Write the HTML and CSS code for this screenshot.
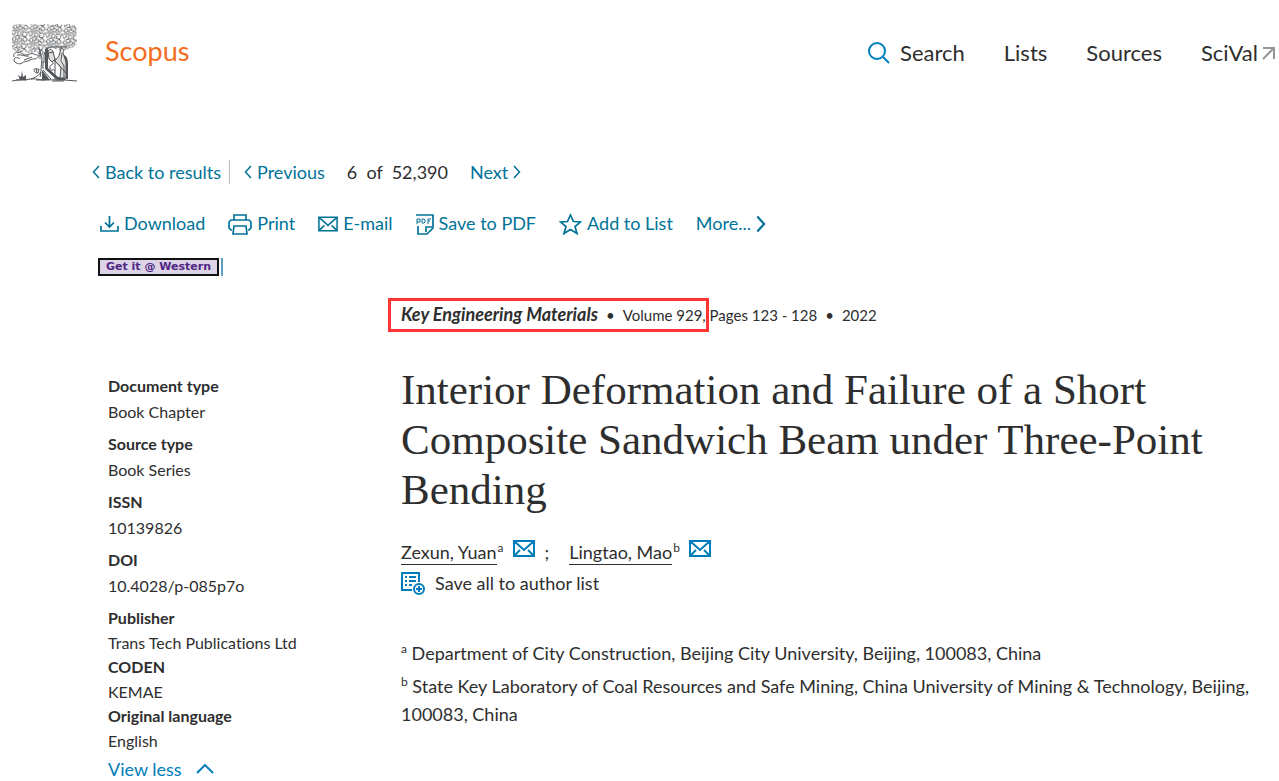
FILE: index.html
```html
<!DOCTYPE html>
<html lang="en">
<head>
    <meta charset="UTF-8">
    <meta name="viewport" content="width=device-width, initial-scale=1.0">
    <title>Scopus - Document details</title>
    <link rel="stylesheet" href="styles.css">
</head>
<body>
    <!-- shared icons -->
    <svg class="sprite" width="0" height="0" aria-hidden="true">
        <symbol id="left" viewBox="0 0 8 14"><path d="M7 1 1.500 7 7 13"/></symbol>
        <symbol id="right" viewBox="0 0 8 14"><path d="M1 1 6.500 7 1 13"/></symbol>
        <symbol id="mail" viewBox="0 0 22 17"><path d="M1 1h20v15H1zM1 1l10 9L21 1M2 15l5-5M20 15l-5-5"/></symbol>
    </svg>

    <header class="header">
        <a class="brand" href="#">
            <svg class="tree" width="66" height="58" viewBox="0 0 66 58" aria-hidden="true">
                <defs>
                    <pattern id="leaves" width="17" height="12" patternUnits="userSpaceOnUse" patternTransform="rotate(4)">
                        <path d="M1 4C1 0 6 0 5 3S2 6 2 3M7 1c5-1 4 5 1 4S6 2 9 2M12 4c-1-5 5-4 4-1s-4 3-3 0M0 9c0-4 5-3 4 0s-4 2-2 0M6 9c1-4 5-1 4 1s-5 1-3-1M11 8c3-3 6 1 4 3s-5 0-3-2M4 12l3-1M10 12l3 0M4 6l3 0M10 6l2 0M16 6l1 2"/>
                    </pattern>
                </defs>
                <path class="canopy" d="M1 1 8 0l6 1 6-1 7 1 6-1 6 1 6-1 6 1 6-1 7 2 1 5-1 6 1 6-3 4-5 2-5 2-6-1-5-2-6 1-3 6-5 1-2-5-6 2-7-1-7 0-6-4 1-6-3-5z"/>
                <path class="line" d="M2 33c-2-5 5-6 9-3s7-2 11 0 6 0 4 3-5 1-8 3-6 1-8 3-8 0-8-3 4-3 6-1M5 31c5-1 8 2 12 1M12 36l8-3M27 24l3 10-1 12c0 4-4 7-10 9M28 27v8M35 23l-3 8v8M31 37v8M29 48l-1 5M31 46l8 9M34 25l5-2 16 0M22 46c1-3 3 0 5-1l-1 4c-2 0-4-1-4-3zM24 44l1 5M43 34v22M38 33c4 0 2 4 3 6s-4 1-3 5 4 0 5 3"/>
                <path class="line" d="M0 57c8-2 12-1 19-2s10 2 17 1 9 1 16 0l13 1M4 56h11M24 56h8M40 57h12"/>
                <path class="shade" d="M33 25v20l12 11h9v-3h-8l-10-9V25zM52 31c3 1 4 5 4 9v15h-3zM8 56l-2-5 3 2 1-6 1 6 3-2v5zM30 46l8 10h-8z"/>
                <path class="figure" d="M36 27c2-3 5-1 5 1l2 7-3 3-3-3zM49 24c3 0 3 3 2 5l3 9v16h-6l1-11-6-6 4-5zM42 36l13 14M50 29l-1 8 3 5v12M36 29l6-1"/>
            </svg>
            <span class="brand_name">Scopus</span>
        </a>
        <nav class="nav">
            <a href="#"><svg class="search" width="24" height="24" viewBox="0 0 24 24" aria-hidden="true"><circle cx="10" cy="10" r="8"/><path d="m16 16 6 6"/></svg>Search</a>
            <a href="#">Lists</a>
            <a href="#">Sources</a>
            <a class="scival" href="#">SciVal<svg width="14" height="14" viewBox="0 0 14 14" aria-hidden="true"><path d="M1 2h11v11M12 2 1 13"/></svg></a>
        </nav>
    </header>

    <div class="tools">
        <nav class="pager">
            <a class="back" href="#"><svg width="8" height="14"><use href="#left"/></svg>Back to results</a>
            <a class="previous" href="#"><svg width="8" height="14"><use href="#left"/></svg>Previous</a>
            <span class="count">6&nbsp; of &nbsp;52,390</span>
            <a href="#">Next<svg width="8" height="14"><use href="#right"/></svg></a>
        </nav>

        <div class="actions">
            <button type="button"><svg class="low" width="19" height="16" viewBox="0 0 19 16" aria-hidden="true"><path d="M1 10v5h17v-5M9.500 0v11M5 6.500l4.500 4.500L14 6.500"/></svg>Download</button>
            <button type="button"><svg class="low" width="24" height="21" viewBox="0 0 24 21" aria-hidden="true"><path d="M6 6V1h12v5M4 16H3l-2-2V8l2-2h18l2 2v6l-2 2h-1M6 12h12l1 8H5z"/></svg>Print</button>
            <button type="button"><svg class="low" width="20" height="16"><use href="#mail"/></svg>E-mail</button>
            <button type="button"><svg class="low" width="18" height="21" viewBox="0 0 18 21" aria-hidden="true"><path d="M0 1h17v13l-6 6H2v-8M16 13h-6v5"/><path class="fine" d="M1 10V5h3v3H1M6 9V5h2l1 1v2L8 9zM12 10V5h3M12 7h2"/></svg>Save to PDF</button>
            <button type="button"><svg class="low" width="23" height="22" viewBox="0 0 23 22" aria-hidden="true"><path d="m11.500 2 3 6.500 7 .5-5.500 4.500 2 7-6.500-4-6.500 4 2-7L1.500 9l7-.5z"/></svg>Add to List</button>
            <button type="button">More...<svg class="low" width="10" height="18"><use href="#right"/></svg></button>
        </div>

        <div class="links">
            <a class="getit" href="#">Get it @ Western</a>
        </div>
    </div>

    <main class="document">
        <aside class="details">
            <dl>
                <div><dt>Document type</dt><dd>Book Chapter</dd></div>
                <div><dt>Source type</dt><dd>Book Series</dd></div>
                <div><dt>ISSN</dt><dd>10139826</dd></div>
                <div><dt>DOI</dt><dd>10.4028/p-085p7o</dd></div>
                <div class="compact"><dt>Publisher</dt><dd>Trans Tech Publications Ltd</dd></div>
                <div class="compact"><dt>CODEN</dt><dd>KEMAE</dd></div>
                <div class="compact"><dt>Original language</dt><dd>English</dd></div>
            </dl>
            <button class="less" type="button">View less<svg width="18" height="10" viewBox="0 0 18 10" aria-hidden="true"><path d="m1 9 8-8 8 8"/></svg></button>
        </aside>

        <article class="article">
            <p class="source"><span class="marked"><b>Key Engineering Materials</b><i>•</i>Volume 929,</span> Pages 123 - 128<i>•</i>2022</p>
            <h1>Interior Deformation and Failure of a Short Composite Sandwich Beam under Three-Point Bending</h1>
            <ul class="authors">
                <li><a class="name" href="#">Zexun, Yuan</a><sup>a</sup><a class="mail" href="#" aria-label="E-mail Zexun, Yuan"><svg width="22" height="17"><use href="#mail"/></svg></a><span class="semi">;</span></li>
                <li><a class="name" href="#">Lingtao, Mao</a><sup>b</sup><a class="mail" href="#" aria-label="E-mail Lingtao, Mao"><svg width="22" height="17"><use href="#mail"/></svg></a></li>
            </ul>
            <button class="save" type="button"><svg width="24" height="24" viewBox="0 0 24 24" aria-hidden="true"><path d="M11 19H1V2h17v9M4 6h2M8 6h7M4 10h2M8 10h7M4 14h2M8 14h3"/><circle cx="18" cy="18" r="5"/><path d="M15 18h6M18 15v6"/></svg>Save all to author list</button>
            <ul class="places">
                <li><sup>a</sup> Department of City Construction, Beijing City University, Beijing, 100083, China</li>
                <li><sup>b</sup> State Key Laboratory of Coal Resources and Safe Mining, China University of Mining &amp; Technology, Beijing, 100083, China</li>
            </ul>
        </article>
    </main>
</body>
</html>
```
FILE: styles.css
```css
*{
    box-sizing: border-box;
    margin: 0;
    padding: 0;
}
body{
    background-color: white;
    color: #2e2e2e;
    font-family: Lato, "Open Sans", sans-serif;
    font-size: 16px;
    font-variant-ligatures: none;
}
a, button{
    color: #007398;
    text-decoration: none;
}
button{
    background: none;
    border: none;
    font: inherit;
    cursor: pointer;
}
ul{
    list-style: none;
}
svg{
    fill: none;
    stroke: currentColor;
    stroke-width: 2;
    flex: none;
}
.sprite{
    position: absolute;
}

/* header */
.header{
    display: flex;
    justify-content: space-between;
    align-items: center;
    padding: 24px 3px 0 12px;
}
.brand{
    display: flex;
    gap: 27px;
}
.tree{
    color: #53565a;
    stroke-width: 1;
}
.canopy{
    fill: url(#leaves);
    stroke: none;
}
.shade{
    fill: #53565a;
    stroke: none;
}
.figure{
    fill: #ddd;
}
.brand_name{
    padding-top: 10px;
    color: #f36d21;
    font-size: 27px;
    line-height: 34px;
}
.nav{
    display: flex;
    gap: 39px;
    font-size: 22px;
    line-height: 30px;
}
.nav a{
    display: flex;
    align-items: center;
    gap: 9px;
    color: #2e2e2e;
}
.search{
    color: #007dbc;
}
.nav .scival{
    gap: 4px;
}
.scival svg{
    color: #969696;
}

/* toolbar */
.tools{
    padding: 78px 24px 0 92px;
    font-size: 18px;
    line-height: 24px;
}
.pager{
    display: flex;
}
.pager a{
    display: flex;
    align-items: center;
    gap: 5px;
}
.pager svg{
    stroke-width: 1.5;
}
.pager .back{
    padding-right: 8px;
    border-right: 1px solid #b9b9b9;
}
.pager .previous{
    padding-left: 14px;
}
.count{
    padding: 0 22px;
}
.actions{
    display: flex;
    gap: 23px;
    padding: 26px 0 0 8px;
}
.actions button{
    display: flex;
    align-items: center;
    gap: 5px;
}
.actions svg{
    stroke-width: 1.7;
}
.low{
    margin-top: 3px;
}
.actions .fine{
    stroke-width: 1;
}
.links{
    display: flex;
    padding: 23px 0 0 6px;
}
.getit{
    padding: 0 6px;
    border: 2px solid #111;
    background-color: #ddd3e7;
    color: #4f2683;
    font: bold 11px/14px "DejaVu Sans", sans-serif;
}
.links::after{
    content: "";
    margin-left: 2px;
    border-right: 2px solid #5c9fc4;
}

/* document */
.document{
    display: grid;
    grid-template-columns: 293px 1fr;
    padding: 25px 20px 0 108px;
}
.details{
    padding-top: 72px;
}
.details div{
    margin-bottom: 6px;
}
.details .compact{
    margin-bottom: 0;
}
dt, dd{
    line-height: 26px;
}
dt{
    font-weight: bold;
}
.compact dd{
    line-height: 23px;
}
.less{
    display: flex;
    align-items: center;
    gap: 14px;
    margin-top: 5px;
    color: #007dbc;
    font-size: 18px;
    line-height: 24px;
}
.source{
    font-size: 15px;
    line-height: 26px;
}
.source b{
    font-size: 18px;
    font-style: italic;
}
.source i{
    padding: 0 8px;
    font-style: normal;
}
.marked{
    position: relative;
}
/* red frame drawn over the source title */
.marked::after{
    content: "";
    position: absolute;
    inset: -8px -3px -8px -13px;
    border: 3px solid #fc3434;
}
h1{
    padding-top: 37px;
    font: 43px/50px "Liberation Serif", serif;
}
.authors{
    display: flex;
    gap: 20px;
    padding-top: 25px;
    font-size: 18px;
    line-height: 24px;
}
.authors li{
    display: flex;
}
.name{
    border-bottom: 1px solid #2e2e2e;
    color: #2e2e2e;
}
sup{
    font-size: 12px;
    line-height: 12px;
}
.authors sup{
    padding: 2px 9px 0 1px;
}
.mail{
    display: flex;
    align-items: flex-start;
    color: #007dbc;
}
.semi{
    padding-left: 10px;
}
.save{
    display: flex;
    align-items: center;
    gap: 10px;
    padding-top: 6px;
    color: #2e2e2e;
    font-size: 18px;
    line-height: 24px;
}
.save svg{
    color: #007dbc;
}
.places{
    padding-top: 44px;
    font-size: 18px;
    line-height: 28px;
}
.places li{
    margin-bottom: 5px;
}
```
